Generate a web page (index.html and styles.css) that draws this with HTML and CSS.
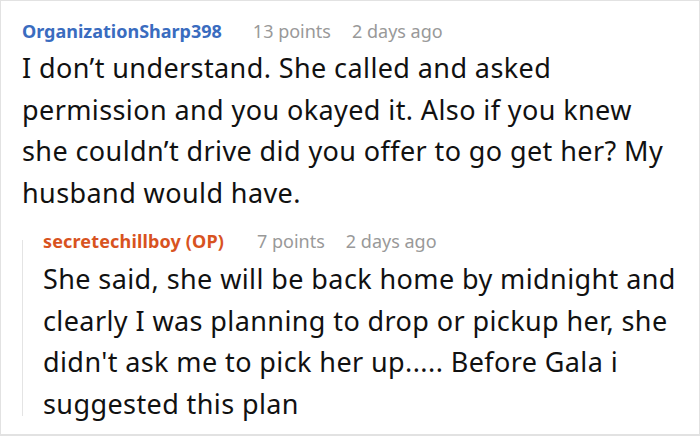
FILE: index.html
```html
<!DOCTYPE html>
<html>
<head>
<meta charset="utf-8">
<link rel="stylesheet" href="styles.css">
</head>
<body>
<div class="frame">
  <div class="comment">
    <div class="meta">
      <span class="user">OrganizationSharp398</span>
      <span class="info">13 points</span>
      <span class="info">2 days ago</span>
    </div>
    <p class="text">I don’t understand. She called and asked permission and you okayed it. Also if you knew she couldn’t drive did you offer to go get her? My husband would have.</p>
    <div class="reply">
      <div class="meta">
        <span class="user op">secretechillboy (OP)</span>
        <span class="info">7 points</span>
        <span class="info">2 days ago</span>
      </div>
      <p class="text">She said, she will be back home by midnight and clearly I was planning to drop or pickup her, she didn't ask me to pick her up..... Before Gala i suggested this plan</p>
    </div>
  </div>
</div>
</body>
</html>
```
FILE: styles.css
```css
html, body {
  margin: 0;
  padding: 0;
  background: #ffffff;
}
.frame {
  box-sizing: border-box;
  width: 700px;
  height: 436px;
  border: 1px solid #e2e2e2;
  border-bottom-width: 2px;
  font-family: "Noto Sans", "Open Sans", sans-serif;
  color: #111;
  overflow: hidden;
}
.comment {
  padding: 18px 0 0 21px;
}
.meta {
  display: flex;
  gap: 21px;
  font-size: 18px;
  line-height: 24px;
}
.user {
  font-weight: bold;
  color: #3a6cbf;
  margin-right: 10px;
}
.user.op {
  color: #d8531f;
  letter-spacing: 0.15px;
  margin-right: 12px;
}
.info {
  color: #999;
}
.text {
  margin: 4px 0 0 0;
  font-size: 27px;
  line-height: 41.5px;
  letter-spacing: 0.4px;
  width: 645px;
}
.reply {
  display: flow-root;
  margin-top: 27px;
  border-left: 1px solid #e4e4e4;
  padding-left: 20px;
}
.reply .meta {
  margin-top: -11px;
}
.reply .text {
  margin: 5px 0 -8px 0;
  width: 634px;
}
```
